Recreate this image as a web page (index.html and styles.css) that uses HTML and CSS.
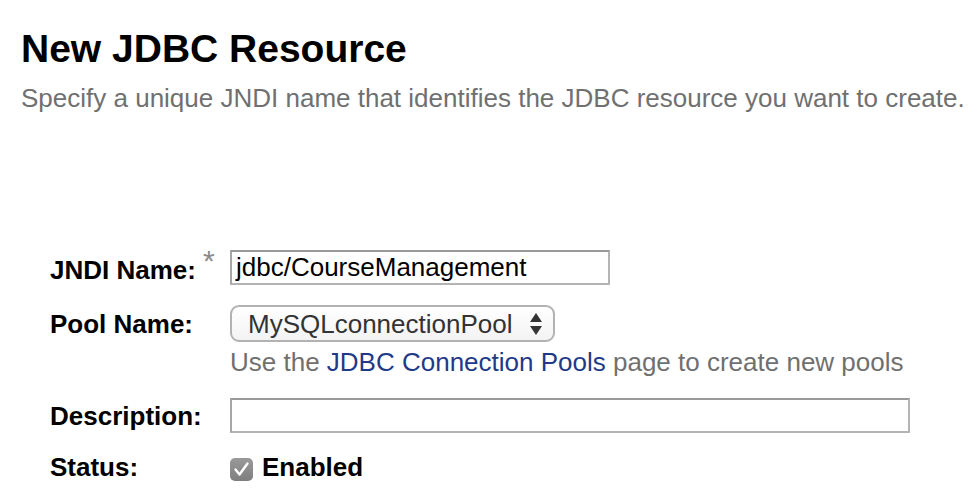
FILE: index.html
```html
<!DOCTYPE html>
<html>
<head>
<meta charset="utf-8">
<title>New JDBC Resource</title>
<link rel="stylesheet" href="styles.css">
</head>
<body>
<div class="page">
  <h1 class="title">New JDBC Resource</h1>
  <p class="subtitle">Specify a unique JNDI name that identifies the JDBC resource you want to create.</p>
  <div class="form">
    <div class="row row-jndi">
      <div class="label">JNDI Name:<span class="req">*</span></div>
      <div class="field"><div class="input input-jndi">jdbc/CourseManagement</div></div>
    </div>
    <div class="row row-pool">
      <div class="label">Pool Name:</div>
      <div class="field">
        <div class="select">
          <span class="select-text">MySQLconnectionPool</span>
          <svg class="select-arrows" width="14" height="24" viewBox="0 0 14 24"><path d="M7 1 L13 10 L1 10 Z" fill="#333"/><path d="M1 14 L13 14 L7 23 Z" fill="#333"/></svg>
        </div>
      </div>
    </div>
    <div class="row row-help">
      <div class="label"></div>
      <div class="help">Use the <a class="link" href="#">JDBC Connection Pools</a> page to create new pools</div>
    </div>
    <div class="row row-desc">
      <div class="label">Description:</div>
      <div class="field"><div class="input input-desc"></div></div>
    </div>
    <div class="row row-status">
      <div class="label">Status:</div>
      <div class="field status">
        <span class="checkbox"><svg width="23" height="23" viewBox="0 0 23 23"><path d="M5.5 11.5 L9.5 16.5 L17.5 5.5" fill="none" stroke="#fff" stroke-width="2.4" stroke-linecap="round" stroke-linejoin="round"/></svg></span>
        <span class="enabled">Enabled</span>
      </div>
    </div>
  </div>
</div>
</body>
</html>
```
FILE: styles.css
```css
html, body {
  margin: 0;
  padding: 0;
  background: #fff;
}
body {
  font-family: "Liberation Sans", Arial, Helvetica, sans-serif;
  color: #000;
}
.page {
  padding: 27px 0 0 21px;
}
.title {
  margin: 0;
  font-size: 39px;
  line-height: 44px;
  font-weight: bold;
  color: #000;
}
.subtitle {
  margin: 12px 0 0 0;
  font-size: 26px;
  line-height: 30px;
  color: #707070;
  white-space: nowrap;
}
.form {
  margin: 137px 0 0 29px;
  display: flex;
  flex-direction: column;
}
.row {
  display: flex;
  align-items: center;
}
.label {
  width: 180px;
  flex: none;
  font-size: 26px;
  line-height: 30px;
  font-weight: bold;
  color: #000;
  white-space: nowrap;
}
.req {
  display: inline-block;
  margin-left: 7px;
  font-size: 30px;
  line-height: 20px;
  font-weight: normal;
  color: #8a8a8a;
  vertical-align: 8px;
}
.input {
  box-sizing: border-box;
  height: 35px;
  border: 2px solid #b4b4b4;
  border-top-color: #9a9a9a;
  border-left-color: #a6a6a6;
  background: #fff;
  font-size: 26px;
  line-height: 31px;
  padding-left: 4px;
  color: #000;
  white-space: nowrap;
}
.input-jndi {
  width: 380px;
}
.input-desc {
  width: 680px;
}
.row-pool {
  margin-top: 20px;
}
.select {
  box-sizing: border-box;
  width: 325px;
  height: 37px;
  border: 2px solid #b2b2b2;
  border-radius: 9px;
  background: linear-gradient(#ffffff, #f3f3f3);
  display: flex;
  align-items: center;
  justify-content: space-between;
  padding: 0 10px 0 16px;
}
.select-text {
  font-size: 26px;
  line-height: 30px;
  color: #333;
}
.select-arrows {
  display: block;
}
.row-help {
  margin-top: 5px;
}
.help {
  font-size: 26px;
  line-height: 30px;
  color: #707070;
  white-space: nowrap;
}
.link {
  color: #1f3a88;
  text-decoration: none;
}
.row-desc {
  margin-top: 21px;
}
.row-status {
  margin-top: 19px;
}
.status {
  display: flex;
  align-items: center;
}
.checkbox {
  width: 23px;
  height: 23px;
  border-radius: 5px;
  background: linear-gradient(#9a9a9a, #7e7e7e);
  display: inline-flex;
  align-items: center;
  justify-content: center;
  margin-top: 5px;
}
.checkbox svg {
  display: block;
}
.enabled {
  margin-left: 9px;
  font-size: 26px;
  line-height: 30px;
  font-weight: bold;
  color: #000;
}
```
